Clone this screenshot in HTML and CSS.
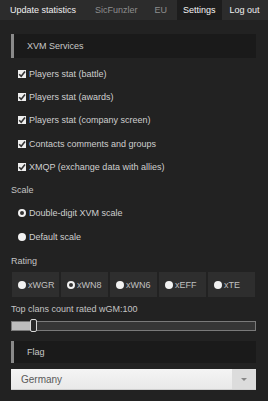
FILE: index.html
```html
<!DOCTYPE html>
<html>
<head>
<meta charset="utf-8">
<link rel="stylesheet" href="styles.css">
</head>
<body>
<nav class="nav">
  <span class="nav-item first">Update statistics</span>
  <span class="nav-item dim second">SicFunzler</span>
  <span class="nav-item dim third">EU</span>
  <span class="nav-item active">Settings</span>
  <span class="nav-item last">Log out</span>
</nav>
<main class="content">
  <div class="section">XVM Services</div>
  <ul class="checks">
    <li class="check"><span class="box"><svg viewBox="0 0 8 8" width="8" height="8"><path d="M1.2 4.2 L3.2 6.2 L7 1.6" fill="none" stroke="#333" stroke-width="1.6"/></svg></span>Players stat (battle)</li>
    <li class="check"><span class="box"><svg viewBox="0 0 8 8" width="8" height="8"><path d="M1.2 4.2 L3.2 6.2 L7 1.6" fill="none" stroke="#333" stroke-width="1.6"/></svg></span>Players stat (awards)</li>
    <li class="check"><span class="box"><svg viewBox="0 0 8 8" width="8" height="8"><path d="M1.2 4.2 L3.2 6.2 L7 1.6" fill="none" stroke="#333" stroke-width="1.6"/></svg></span>Players stat (company screen)</li>
    <li class="check"><span class="box"><svg viewBox="0 0 8 8" width="8" height="8"><path d="M1.2 4.2 L3.2 6.2 L7 1.6" fill="none" stroke="#333" stroke-width="1.6"/></svg></span>Contacts comments and groups</li>
    <li class="check"><span class="box"><svg viewBox="0 0 8 8" width="8" height="8"><path d="M1.2 4.2 L3.2 6.2 L7 1.6" fill="none" stroke="#333" stroke-width="1.6"/></svg></span>XMQP (exchange data with allies)</li>
  </ul>
  <div class="label">Scale</div>
  <div class="radio-row"><span class="radio on"></span>Double-digit XVM scale</div>
  <div class="radio-row"><span class="radio"></span>Default scale</div>
  <div class="label">Rating</div>
  <div class="rating">
    <div class="rbtn"><span class="radio"></span>xWGR</div>
    <div class="rbtn"><span class="radio on"></span>xWN8</div>
    <div class="rbtn"><span class="radio"></span>xWN6</div>
    <div class="rbtn"><span class="radio"></span>xEFF</div>
    <div class="rbtn"><span class="radio"></span>xTE</div>
  </div>
  <div class="label small">Top clans count rated wGM:100</div>
  <div class="slider">
    <div class="fill"></div>
    <div class="handle"></div>
  </div>
  <div class="section flag">Flag</div>
  <div class="select">
    <span class="select-text">Germany</span>
    <span class="select-arrow"></span>
  </div>
</main>
</body>
</html>
```

FILE: styles.css
```css
html, body {
  margin: 0;
  padding: 0;
  background: #222222;
  font-family: "Liberation Sans", Arial, sans-serif;
  font-size: 9px;
  color: #cfcfcf;
  width: 268px;
  height: 401px;
  overflow: hidden;
}

.nav {
  display: flex;
  height: 20px;
  background: #2c2c2c;
  padding-left: 4px;
}

.nav-item {
  display: flex;
  align-items: center;
  padding: 0 6px;
  color: #f0f0f0;
  font-size: 9px;
  white-space: nowrap;
}

.nav-item.second { margin-left: 7px; }
.nav-item.third { margin-left: 5px; }
.nav-item.active { margin-left: 4px; }
.nav-item.last { margin-left: 2px; }

.nav-item.dim {
  color: #8e8e8e;
}

.nav-item.active {
  background: #1d1d1d;
  color: #f4f4f4;
}

.content {
  padding: 14px 12px 0 10px;
}

.section {
  height: 24px;
  background: #1a1a1a;
  border-left: 3px solid #8a8a8a;
  margin-left: 1px;
  padding-left: 13px;
  display: flex;
  align-items: center;
  color: #c8c8c8;
  font-size: 9px;
  box-sizing: border-box;
}

.checks {
  list-style: none;
  margin: 4px 0 0 0;
  padding: 0;
}

.check {
  display: flex;
  align-items: center;
  height: 23.3px;
  padding-left: 8px;
  color: #cfcfcf;
}

.box {
  width: 8px;
  height: 8px;
  background: #eeeeee;
  margin-right: 3px;
  display: flex;
}

.label {
  height: 23px;
  display: flex;
  align-items: center;
  padding-left: 1px;
  color: #c4c4c4;
}

.label.small {
  height: 24px;
}

.radio-row {
  display: flex;
  align-items: center;
  height: 24px;
  padding-left: 8px;
}

.radio {
  width: 8px;
  height: 8px;
  border-radius: 50%;
  background: #f2f2f2;
  margin-right: 3px;
  box-sizing: border-box;
  flex: none;
}

.radio.on {
  background: #333;
  border: 2px solid #f2f2f2;
}

.rating {
  display: grid;
  grid-template-columns: repeat(5, 47px);
  gap: 2px;
  margin: 0 0 0 2px;
}

.rbtn {
  height: 25px;
  background: #2e2e2e;
  display: flex;
  align-items: center;
  padding-left: 6px;
  color: #c0c0c0;
  font-size: 9px;
}

.rbtn .radio {
  margin-right: 2px;
}

.slider {
  position: relative;
  height: 8px;
  margin: 0 0 0 1px;
  background: #363636;
  border: 1px solid #7a7a7a;
}

.fill {
  width: 20px;
  height: 100%;
  background: #bdbdbd;
}

.handle {
  position: absolute;
  left: 18px;
  top: -3px;
  width: 5px;
  height: 11px;
  background: #2a2a2a;
  border: 1px solid #d8d8d8;
  border-radius: 2px;
}

.section.flag {
  margin-top: 10px;
  height: 22px;
}

.select {
  margin: 6px 0 0 1px;
  height: 20px;
  display: flex;
  background: #eeeeee;
  border-bottom: 1px solid #cfcfcf;
}

.select-text {
  flex: 1;
  display: flex;
  align-items: center;
  padding-left: 10px;
  color: #5a5a5a;
  font-size: 10px;
  background: linear-gradient(#f4f4f4, #e9e9e9);
}

.select-arrow {
  width: 24px;
  background: #dcdcdc;
  display: flex;
  align-items: center;
  justify-content: center;
}

.select-arrow::after {
  content: "";
  border-left: 3px solid transparent;
  border-right: 3px solid transparent;
  border-top: 3px solid #888;
}
```
